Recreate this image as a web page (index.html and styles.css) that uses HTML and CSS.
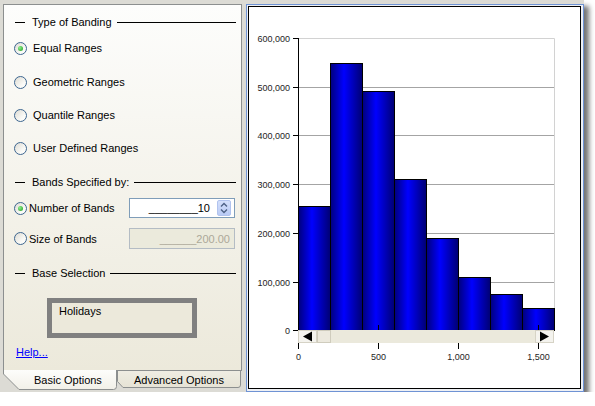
FILE: index.html
```html
<!DOCTYPE html>
<html>
  <head>
    <meta charset="utf-8">
    <title>Banding</title>
    <link rel="stylesheet" href="styles.css">
  </head>
  <body>
    <div class="window">
      <div class="options">
        <div class="panel">
          <div class="group-title"><span>Type of Banding</span></div>
          <label class="choice first"><input type="radio" name="banding" checked>Equal Ranges</label>
          <label class="choice wide"><input type="radio" name="banding">Geometric Ranges</label>
          <label class="choice"><input type="radio" name="banding">Quantile Ranges</label>
          <label class="choice"><input type="radio" name="banding">User Defined Ranges</label>

          <div class="group-title wide"><span>Bands Specified by:</span></div>
          <div class="field count">
            <label class="choice tight"><input type="radio" name="bands" checked>Number of Bands</label>
            <div class="textbox">
              <span class="value">________10</span>
              <span class="spinner">
                <svg width="8" height="12" viewBox="0 0 8 12">
                  <path d="M1 4.5 L4 1.5 L7 4.5 M1 7.5 L4 10.5 L7 7.5" fill="none" stroke="#4d6185" stroke-width="1.4"/>
                </svg>
              </span>
            </div>
          </div>
          <div class="field size">
            <label class="choice tight"><input type="radio" name="bands">Size of Bands</label>
            <div class="textbox disabled"><span class="value">______200.00</span></div>
          </div>

          <div class="group-title base"><span>Base Selection</span></div>
          <div class="base-box">Holidays</div>
          <a class="help" href="#">Help...</a>
        </div>

        <div class="tabs">
          <div class="tab active">
            <svg class="tab-shape" width="114" height="20" viewBox="0 0 114 20">
              <defs>
                <linearGradient id="activeTab" x1="0" y1="0" x2="0" y2="1">
                  <stop offset="0" stop-color="#fdfdfb"/>
                  <stop offset="1" stop-color="#f2f0e8"/>
                </linearGradient>
              </defs>
              <path d="M0.5 0 V4 L16 19.5 H110.5 Q113.5 19.5 113.5 16.5 V0" fill="url(#activeTab)" stroke="#8c8f8f"/>
            </svg>
            <span class="tab-label">Basic Options</span>
          </div>
          <div class="tab">
            <svg class="tab-shape" width="125" height="20" viewBox="0 0 125 20">
              <defs>
                <linearGradient id="idleTab" x1="0" y1="0" x2="0" y2="1">
                  <stop offset="0" stop-color="#efede3"/>
                  <stop offset="1" stop-color="#e6e3d5"/>
                </linearGradient>
              </defs>
              <path d="M0.5 0.5 V11.5 L6 17.5 H121 Q123.5 17.5 123.5 15 V0.5 Z" fill="url(#idleTab)" stroke="#8c8f8f"/>
              <path d="M0 0.5 H125" stroke="#8c8f8f"/>
            </svg>
            <span class="tab-label">Advanced Options</span>
          </div>
        </div>
      </div>

      <div class="chart-pane">
        <div class="chart">
          <svg width="331" height="381" viewBox="0 0 331 381">
            <defs>
              <linearGradient id="barFill" x1="0" y1="0" x2="1" y2="0">
                <stop offset="0" stop-color="#00007c"/>
                <stop offset="0.42" stop-color="#0000ff"/>
                <stop offset="1" stop-color="#000072"/>
              </linearGradient>
            </defs>

            <!-- grid -->
            <g stroke-width="1">
              <path d="M49 31.5 H305.5 V323" fill="none" stroke="#d2d2d2"/>
              <path d="M49 80.5 H305 M49 128.5 H305 M49 177.5 H305 M49 226.5 H305 M49 275.5 H305" stroke="#a4a4a4"/>
            </g>

            <!-- bars, 200 wide each -->
            <g fill="url(#barFill)" stroke="#000">
              <rect x="49.5" y="199.5" width="32" height="124"/>
              <rect x="81.5" y="56.5" width="32" height="267"/>
              <rect x="113.5" y="84.5" width="32" height="239"/>
              <rect x="145.5" y="172.5" width="32" height="151"/>
              <rect x="177.5" y="231.5" width="32" height="92"/>
              <rect x="209.5" y="270.5" width="32" height="53"/>
              <rect x="241.5" y="287.5" width="32" height="36"/>
              <rect x="273.5" y="301.5" width="32" height="22"/>
            </g>

            <!-- y axis -->
            <g stroke="#000">
              <path d="M49.5 31 V324"/>
              <path d="M44 31.5 H49 M44 80.5 H49 M44 128.5 H49 M44 177.5 H49 M44 226.5 H49 M44 275.5 H49 M44 323.5 H49"/>
              <path d="M129.5 318 V323 M289.5 318 V323"/>
            </g>
            <g class="axis-label" text-anchor="end">
              <text x="41" y="34.5">600,000</text>
              <text x="41" y="83.5">500,000</text>
              <text x="41" y="131.5">400,000</text>
              <text x="41" y="180.5">300,000</text>
              <text x="41" y="229.5">200,000</text>
              <text x="41" y="278.5">100,000</text>
              <text x="41" y="326.5">0</text>
            </g>

            <!-- horizontal scroller -->
            <rect x="49" y="323" width="256" height="13" fill="#ebe9dc"/>
            <rect x="49.5" y="323.5" width="18" height="12" fill="#f4f3ee" stroke="#d6d3c6"/>
            <rect x="68.5" y="323.5" width="13" height="12" fill="#ece9de" stroke="#cfccbd"/>
            <rect x="286.5" y="323.5" width="18" height="12" fill="#f4f3ee" stroke="#d6d3c6"/>
            <polygon points="54,329.5 63,324.5 63,334.5" fill="#000"/>
            <polygon points="300,329.5 291,324.5 291,334.5" fill="#000"/>

            <!-- x axis -->
            <path d="M49.5 336 V342 M129.5 336 V342 M209.5 336 V342 M289.5 336 V342" stroke="#000"/>
            <g class="axis-label" text-anchor="middle">
              <text x="49.5" y="353">0</text>
              <text x="129.5" y="353">500</text>
              <text x="209.5" y="353">1,000</text>
              <text x="289.5" y="353">1,500</text>
            </g>
          </svg>
        </div>
      </div>
    </div>
  </body>
</html>
```

FILE: styles.css
```css
html {
  margin: 0;
  padding: 0;
}
body {
  margin: 0;
  padding: 0;
  background: #fff;
  font-family: "Liberation Sans", Arial, sans-serif;
  font-size: 11px;
  color: #000;
}

.window {
  width: 584px;
  height: 392px;
  box-sizing: border-box;
  padding: 4px 0 0 3px;
  display: flex;
  gap: 4px;
  align-items: flex-start;
  background: #dcdbd5;
  box-shadow: 5px 6px 5px rgba(0, 0, 0, 0.55);
}

/* left side: options panel with tabs under it */
.options {
  width: 239px;
  display: flex;
  flex-direction: column;
}
.panel {
  height: 366px;
  box-sizing: border-box;
  padding-top: 9px;
  border: 1px solid #8c8f8f;
  border-bottom: none;
  background: linear-gradient(#fdfdfc, #ece9db);
  display: flex;
  flex-direction: column;
}

.group-title {
  height: 16px;
  display: flex;
  align-items: center;
  padding: 0 5px 0 11px;
}
.group-title::before {
  content: "";
  width: 10px;
  height: 1px;
  margin-right: 7px;
  background: #000;
}
.group-title::after {
  content: "";
  flex: 1;
  height: 1px;
  margin-left: 5px;
  background: #000;
}
.group-title.wide {
  margin-top: 18px;
}
.group-title.base {
  margin-top: 16px;
}

.choice {
  height: 16px;
  margin: 17px 0 0 10px;
  display: flex;
  align-items: center;
  gap: 6px;
}
.choice.first {
  margin-top: 10px;
}
.choice.wide {
  margin-top: 18px;
}
.choice.tight {
  margin: 0 0 0 10px;
  gap: 2px;
}
.choice input {
  appearance: none;
  margin: 0;
  width: 13px;
  height: 13px;
  box-sizing: border-box;
  border: 1px solid #3d6690;
  border-radius: 50%;
  background: linear-gradient(135deg, #dddbd3, #fbfbf8 70%);
  display: grid;
  place-items: center;
}
.choice input:checked::after {
  content: "";
  width: 5px;
  height: 5px;
  border-radius: 50%;
  background: radial-gradient(circle at 35% 35%, #8ef08e, #1a9a1a);
}

.field {
  display: flex;
  align-items: center;
  padding-right: 6px;
}
.field.count {
  margin-top: 8px;
  height: 20px;
}
.field.size {
  margin-top: 10px;
  height: 21px;
}

.textbox {
  margin-left: auto;
  width: 106px;
  height: 100%;
  box-sizing: border-box;
  border: 1px solid #7f9db9;
  background: #fff;
  display: flex;
  align-items: center;
  justify-content: flex-end;
  padding-right: 3px;
}
.textbox .value {
  margin-right: 7px;
}
.textbox.disabled {
  border-color: #b4bcc4;
  background: #ebeadc;
  color: #aca899;
}
.textbox.disabled .value {
  margin-right: 1px;
}
.spinner {
  width: 14px;
  height: 16px;
  box-sizing: border-box;
  border: 1px solid #b1c3ee;
  border-radius: 2px;
  background: linear-gradient(#d4e0fb, #b9cbf5);
  display: grid;
  place-items: center;
}

.base-box {
  margin: 17px 0 0 43px;
  width: 150px;
  height: 40px;
  box-sizing: border-box;
  border: 5px solid #808080;
  background: #ece9db;
  padding: 1px 7px;
  line-height: 14px;
}

.help {
  margin: 7px 0 0 12px;
  line-height: 14px;
  color: #0000ff;
  align-self: flex-start;
}

.tabs {
  height: 20px;
  display: flex;
}
.tab {
  position: relative;
  height: 20px;
  line-height: 20px;
}
.tab.active {
  width: 114px;
}
.tab:not(.active) {
  width: 125px;
}
.tab-shape {
  position: absolute;
  left: 0;
  top: 0;
}
.tab-label {
  position: relative;
  padding-left: 31px;
}
.tab:not(.active) .tab-label {
  padding-left: 17px;
}

/* right side: histogram */
.chart-pane {
  width: 338px;
  height: 388px;
  box-sizing: border-box;
  border: 1px solid #6f93d4;
  padding: 1px 2px 2px 1px;
  background: #eef0f4;
}
.chart {
  height: 100%;
  box-sizing: border-box;
  border: 1px solid #000;
  background: #fff;
}
.chart svg {
  display: block;
}
.axis-label {
  font-family: "Liberation Sans", Arial, sans-serif;
  font-size: 9px;
  fill: #1e1e1e;
}
```
